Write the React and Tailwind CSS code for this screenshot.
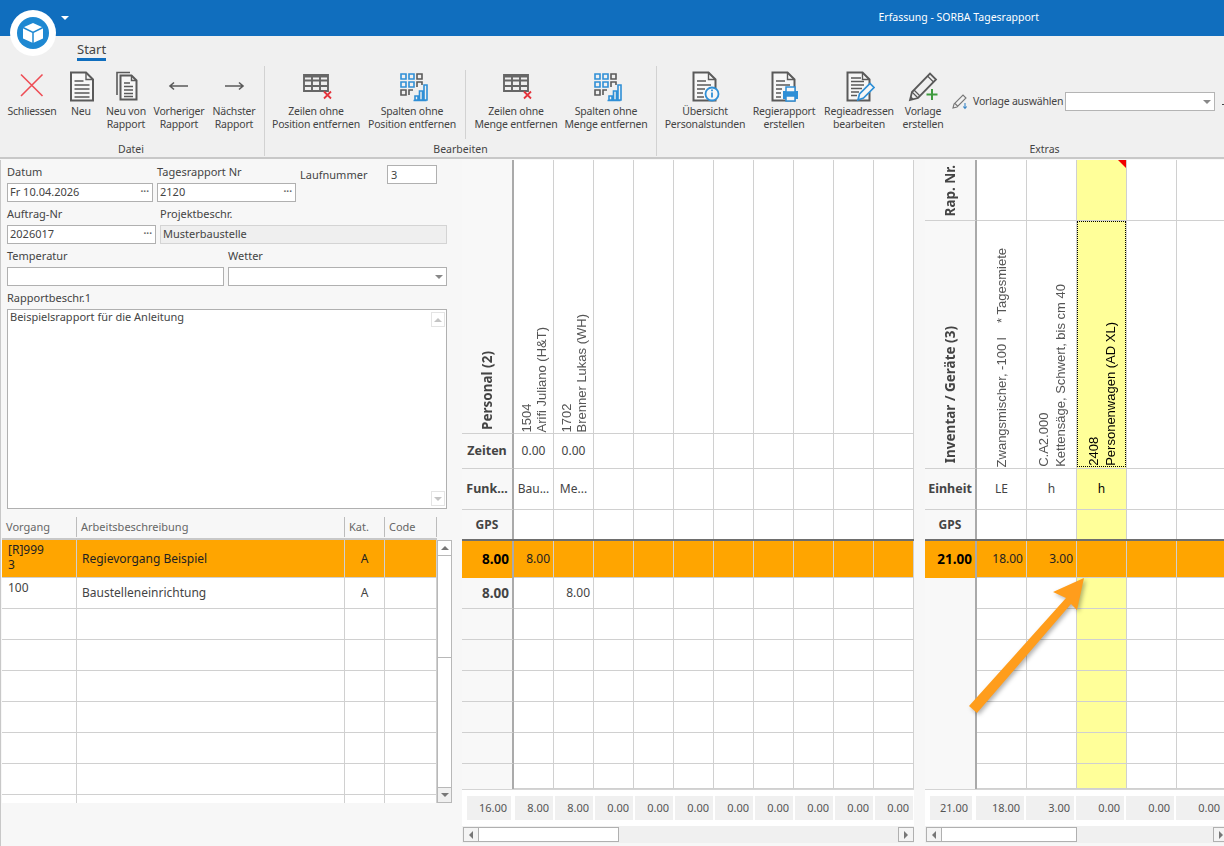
const gray = "#5a5a5a";
const blue = "#2f8fd6";

function Doc({ children, back, dx = 0 }) {
  return (
    <svg width="32" height="32" viewBox="0 0 32 32" fill="none">
      <g transform={`translate(${dx} 0)`}>
        {back && <path d="M5 25V2.5h13" stroke={gray} strokeWidth="1.6" />}
        <path d={back ? "M8.5 5.5h11l5 5v19h-16z" : "M4.5 2.5h15l7 7v21h-22z"} stroke={gray} strokeWidth="2" fill="#f7f7f7" />
        <path d={back ? "M19.5 5.5v5h5" : "M19.5 2.5v7h7"} stroke={gray} strokeWidth="1.4" />
        {children}
      </g>
    </svg>
  );
}

function Lines({ d }) {
  return <path d={d} stroke={gray} strokeWidth="1.5" />;
}

const icons = {
  close: (
    <svg width="32" height="32" viewBox="0 0 32 32" fill="none">
      <path d="M5 4.5l21.500 21.500M26.500 4.500L5 26" stroke="#ee4d55" strokeWidth="1.6" />
    </svg>
  ),
  neu: <Doc dx={1.5}><Lines d="M8 11h9M8 15h15M8 19h15M8 23h15M8 27h15" /></Doc>,
  neuVon: <Doc back dx={2}><Lines d="M12 13h6M12 16.500h9M12 20h9M12 23.500h9M12 26.500h9" /></Doc>,
  prev: (
    <svg width="32" height="32" viewBox="0 0 32 32" fill="none">
      <path d="M7 16h18M11 12.500L7 16l4 3.500" stroke={gray} strokeWidth="1.6" />
    </svg>
  ),
  next: (
    <svg width="32" height="32" viewBox="0 0 32 32" fill="none">
      <path d="M7 16h18M21 12.500L25 16l-4 3.500" stroke={gray} strokeWidth="1.6" />
    </svg>
  ),
  rows: (
    <svg width="32" height="32" viewBox="0 0 32 32" fill="none">
      <path d="M4 5h24v16H4zM4 10.500h24M4 16h24M12 5v16M20 5v16" stroke="#666" strokeWidth="1.900" />
      <path d="M4 5h24v2.500H4z" fill="#666" />
      <path d="M24 21.500l7 7M31 21.500l-7 7" stroke="#e5343c" strokeWidth="1.8" />
    </svg>
  ),
  cols: (
    <svg width="32" height="32" viewBox="0 0 32 32" fill="none">
      <path d="M5 4h5v5H5zM13 4h5v5h-5zM5 12h5v5H5zM13 12h5v5h-5z" stroke={blue} strokeWidth="1.6" />
      <path d="M21 4h5v5h-5z" stroke={gray} strokeWidth="1.6" />
      <path d="M21 17v-5h5v3M5 20h5v5H5zM13 25v-5h4" stroke={gray} strokeWidth="1.6" />
      <path d="M17.500 30.500h13M19 26h3v4h-3zM23.500 21h3v9h-3zM28 15h3v15h-3z" stroke={blue} strokeWidth="1.600" />
    </svg>
  ),
  info: (
    <Doc>
      <Lines d="M8 11h9M8 15h14M8 19h8M8 23h6M8 27h7" />
      <circle cx="23" cy="24" r="6.500" fill="#f7f7f7" stroke={blue} strokeWidth="1.800" />
      <path d="M23 22.500v5M23 19.500v1.800" stroke={blue} strokeWidth="1.800" />
    </Doc>
  ),
  print: (
    <Doc>
      <Lines d="M8 11h9M8 15h14M8 19h6M8 23h5M8 27h5" />
      <path d="M15 21h15v8H15z" fill={blue} />
      <path d="M18 17h9v5h-9zM18 26h9v5h-9z" fill="#f7f7f7" stroke={blue} strokeWidth="1.500" />
    </Doc>
  ),
  edit: (
    <Doc>
      <Lines d="M8 8h10M8 11.500h13M8 15h13M8 18.500h11M8 22h8M8 25.500h6" />
      <path d="M15 30l1.500-6L27 13.500l4 4L20.500 28z" fill="#f7f7f7" stroke={blue} strokeWidth="1.700" />
    </Doc>
  ),
  vorlage: (
    <svg width="32" height="32" viewBox="0 0 32 32" fill="none">
      <path d="M3 30l2-8L23 3.500l6 6L11 28z" stroke={gray} strokeWidth="1.800" />
      <path d="M5 22l6 6M7 20l6 6M20.500 6l6 6" stroke={gray} strokeWidth="1.200" />
      <path d="M3 30l.8-4 3.200 3.200z" fill={gray} />
      <path d="M25 19v11M19.500 24.500h11" stroke="#3f9b3f" strokeWidth="2" />
    </svg>
  ),
};

const dateiButtons = [
  { w: "w-[52px]", icon: "close", text: ["Schliessen"] },
  { w: "w-[46px]", icon: "neu", text: ["Neu"] },
  { w: "w-[44px]", icon: "neuVon", text: ["Neu von", "Rapport"] },
  { w: "w-[62px]", icon: "prev", text: ["Vorheriger", "Rapport"] },
  { w: "w-[48px]", icon: "next", text: ["Nächster", "Rapport"] },
];

function RibbonButton({ w, icon, text }) {
  return (
    <div className={`${w} flex flex-col items-center shrink-0`}>
      <div className="h-[32px] w-[32px]">{icons[icon]}</div>
      <div className="mt-[3px] flex flex-col items-center whitespace-nowrap text-[10.5px] leading-[13px] text-[#444] tracking-[-0.2px]">
        {text.map((t) => (
          <span key={t}>{t}</span>
        ))}
      </div>
    </div>
  );
}

function GroupLabel({ children, className }) {
  return <div className={`mt-auto h-[14px] text-center text-[10.5px] leading-[14px] text-[#444] ${className || ""}`}>{children}</div>;
}

function Ribbon() {
  return (
    <div className="h-[123px] bg-[#f0f0f0] border-b-2 border-[#c8c8c8] shrink-0">
      <div className="flex h-[30px] pl-[77px] pt-[6px]">
        <div className="h-[19px] border-b-[3px] border-[#106ebe] text-[13px] leading-[15px] text-[#444]">Start</div>
      </div>
      <div className="flex h-[90px]">
        <div className="flex w-[265px] flex-col border-r border-[#d2d2d2] pt-[4px] pl-[6px]">
          <div className="flex">
            {dateiButtons.map((b) => (
              <RibbonButton key={b.icon} {...b} />
            ))}
          </div>
          <GroupLabel className="pr-[8px]">Datei</GroupLabel>
        </div>
        <div className="flex w-[392px] flex-col border-r border-[#d2d2d2] pt-[4px]">
          <div className="flex">
            <div className="flex h-[69px] w-[201px] border-r border-[#d2d2d2] pl-[3px]">
              <RibbonButton w="w-[96px]" icon="rows" text={["Zeilen ohne", "Position entfernen"]} />
              <RibbonButton w="w-[96px]" icon="cols" text={["Spalten ohne", "Position entfernen"]} />
            </div>
            <div className="flex pl-[2px]">
              <RibbonButton w="w-[96px]" icon="rows" text={["Zeilen ohne", "Menge entfernen"]} />
              <RibbonButton w="w-[84px]" icon="cols" text={["Spalten ohne", "Menge entfernen"]} />
            </div>
          </div>
          <GroupLabel>Bearbeiten</GroupLabel>
        </div>
        <div className="flex w-[567px] flex-col pt-[4px] pl-[7px] overflow-hidden">
          <div className="flex">
            <RibbonButton w="w-[82px]" icon="info" text={["Übersicht", "Personalstunden"]} />
            <RibbonButton w="w-[76px]" icon="print" text={["Regierapport", "erstellen"]} />
            <RibbonButton w="w-[74px]" icon="edit" text={["Regieadressen", "bearbeiten"]} />
            <RibbonButton w="w-[54px]" icon="vorlage" text={["Vorlage", "erstellen"]} />
            <div className="ml-[2px] flex h-[19px] mt-[22px] items-center">
              <svg width="17" height="17" viewBox="0 0 17 17" fill="none">
                <path d="M1 15l1-4L11 2l3 3-9 9zM3 10.500l3 3" stroke="#777" strokeWidth="1.100" />
                <path d="M13 10v5M11.300 13.500L13 15.500l1.700-2" stroke="#3a87c8" strokeWidth="1.100" />
              </svg>
              <span className="ml-[4px] w-[92px] whitespace-nowrap text-[10.5px] text-[#444] tracking-[-0.2px]">Vorlage auswählen</span>
              <div className="flex h-[19px] w-[150px] items-center justify-end border border-[#b4b4b4] bg-white pr-[3px]">
                <Caret />
              </div>
              <div className="ml-[7px] mt-[6px] h-[1px] w-[3px] bg-[#444]" />
            </div>
          </div>
          <GroupLabel className="w-[761px]">Extras</GroupLabel>
        </div>
      </div>
    </div>
  );
}

function Caret() {
  return <div className="h-0 w-0 border-x-[4px] border-t-[4px] border-x-transparent border-t-[#888]" />;
}

function Dots() {
  return <span className="text-[10px] font-bold leading-[10px] tracking-[0px] text-[#666] -mt-[4px]">···</span>;
}

function Field({ label, w, className, children }) {
  return (
    <div className={`${w} shrink-0 ${className || ""}`}>
      <div className="h-[18px] whitespace-nowrap text-[11px] leading-[14px] text-[#444]">{label}</div>
      {children}
    </div>
  );
}

function Input({ value, dots, caret, disabled }) {
  return (
    <div className={`flex h-[19px] items-center justify-between border pl-[2px] pr-[3px] text-[11px] text-[#444] ${disabled ? "border-[#d4d4d4] bg-[#efefef]" : "border-[#b0b0b0] bg-white"}`}>
      <span>{value}</span>
      {dots && <Dots />}
      {caret && <Caret />}
    </div>
  );
}

const leftRows = [
  { h: "h-[38px]", bg: "bg-[#ffa500]", text: "text-[#222]", a: "[R]999", a2: "3", b: "Regievorgang Beispiel", c: "A" },
  { h: "h-[31px]", bg: "bg-white", text: "text-[#444]", a: "100", b: "Baustelleneinrichtung", c: "A" },
  { h: "h-[31px]", bg: "bg-white" },
  { h: "h-[31px]", bg: "bg-white" },
  { h: "h-[31px]", bg: "bg-white" },
  { h: "h-[31px]", bg: "bg-white" },
  { h: "h-[31px]", bg: "bg-white" },
  { h: "h-[31px]", bg: "bg-white" },
  { h: "h-[8px]", bg: "bg-white", last: true },
];

function ScrollBtn({ up }) {
  return (
    <div className="flex h-[15px] w-[14px] shrink-0 items-center justify-center border border-[#e4e4e4] bg-white">
      <div className={`h-0 w-0 border-x-[4px] border-x-transparent ${up ? "border-b-[4px] border-b-[#c4c4c4]" : "border-t-[4px] border-t-[#c4c4c4]"}`} />
    </div>
  );
}

function LeftTable() {
  return (
    <div className="flex pl-[1px]">
      <div className="w-[435px]">
        <div className="flex h-[23px] border-b-2 border-[#c8c8c8] text-[11px] text-[#666]">
          <div className="w-[75px] border-r border-[#bcbcbc] h-[20px] pl-[4px] leading-[20px]">Vorgang</div>
          <div className="w-[268px] border-r border-[#bcbcbc] h-[20px] pl-[4px] leading-[20px]">Arbeitsbeschreibung</div>
          <div className="w-[40px] border-r border-[#bcbcbc] h-[20px] pl-[4px] leading-[20px]">Kat.</div>
          <div className="w-[52px] border-r border-[#bcbcbc] h-[20px] pl-[4px] leading-[20px]">Code</div>
        </div>
        {leftRows.map((r, i) => (
          <div key={i} className={`flex ${r.h} ${r.bg} ${r.text || ""} ${r.last ? "" : "border-b border-[#d0d0d0]"} text-[12px]`}>
            <div className="w-[75px] border-r border-[#d0d0d0] pl-[6px] pt-[2px] leading-[15px]">
              <div>{r.a}</div>
              <div>{r.a2}</div>
            </div>
            <div className="flex w-[268px] items-center border-r border-[#d0d0d0] pl-[5px]">{r.b}</div>
            <div className="flex w-[40px] items-center justify-center border-r border-[#d0d0d0]">{r.c}</div>
            <div className="w-[52px] border-r border-[#d0d0d0]" />
          </div>
        ))}
      </div>
      <div className="mt-[23px] flex h-[263px] w-[15px] flex-col bg-white border border-[#b8b8b8]">
        <div className="flex h-[15px] shrink-0 items-center justify-center border-b border-[#b8b8b8]">
          <div className="h-0 w-0 border-x-[4px] border-b-[4px] border-x-transparent border-b-[#777]" />
        </div>
        <div className="h-[102px] border-b border-[#b8b8b8]" />
        <div className="mt-auto flex h-[15px] shrink-0 items-center justify-center border-t border-[#b8b8b8] bg-[#f0f0f0]">
          <div className="h-0 w-0 border-x-[4px] border-t-[4px] border-x-transparent border-t-[#777]" />
        </div>
      </div>
    </div>
  );
}

function LeftPanel() {
  return (
    <div className="w-[458px] shrink-0 border-l border-[#c8c8c8] pt-[5px]">
      <div className="flex pl-[6px]">
        <Field label="Datum" w="w-[146px]"><Input value="Fr 10.04.2026" dots /></Field>
        <Field label="Tagesrapport Nr" w="w-[139px]" className="ml-[4px]"><Input value="2120" dots /></Field>
        <div className="ml-[4px] flex">
          <div className="h-[20px] w-[87px] text-[11px] leading-[20px] text-[#444]">Laufnummer</div>
          <div className="h-[19px] w-[50px] border border-[#b0b0b0] bg-white px-[3px] text-[11px] leading-[17px] text-[#444]">3</div>
        </div>
      </div>
      <div className="mt-[5px] flex pl-[6px]">
        <Field label="Auftrag-Nr" w="w-[149px]"><Input value="2026017" dots /></Field>
        <Field label="Projektbeschr." w="w-[287px]" className="ml-[4px]"><Input value="Musterbaustelle" disabled /></Field>
      </div>
      <div className="mt-[5px] flex pl-[6px]">
        <Field label="Temperatur" w="w-[217px]"><Input /></Field>
        <Field label="Wetter" w="w-[219px]" className="ml-[4px]"><Input caret /></Field>
      </div>
      <div className="mt-[5px] pl-[6px]">
        <Field label="Rapportbeschr.1" w="w-[440px]">
          <div className="flex h-[200px] border border-[#b0b0b0] bg-white pl-[2px] text-[11px] text-[#444]">
            <div className="flex-1 leading-[14px]">Beispielsrapport für die Anleitung</div>
            <div className="mr-[1px] flex flex-col justify-between py-[2px]">
              <ScrollBtn up />
              <ScrollBtn />
            </div>
          </div>
        </Field>
      </div>
      <div className="mt-[8px]">
        <LeftTable />
      </div>
    </div>
  );
}

function Vertical({ lines, dark, className }) {
  return (
    <div className={`[writing-mode:vertical-rl] rotate-180 whitespace-pre ${className || ""} ${dark ? "text-black" : "text-[#555]"}`}>
      {lines.map((l) => (
        <div key={l}>{l}</div>
      ))}
    </div>
  );
}

const headCell = "shrink-0 w-[52px] border-r-2 border-[#aaaaaa] bg-[#f8f8f8] font-bold text-[#444]";

function Row({ h, head, cells, count, cw, bg, yellow, headLine }) {
  const list = Array.from({ length: count });
  return (
    <div className={`flex ${h}`}>
      <div className={`${headCell} flex items-center justify-end pr-[3px] text-[13.5px] ${bg === "orange" ? "!bg-[#ffa500] !text-black" : ""} ${headLine ? "border-b border-b-[#d0d0d0]" : ""}`}>
        {head}
      </div>
      {list.map((_, i) => (
        <div
          key={i}
          className={`${cw} shrink-0 flex items-center justify-end border-r border-b border-[#d0d0d0] pr-[3px] text-[12px] text-[#444] ${bg === "orange" ? "bg-[#ffa500] !text-[#222]" : yellow === i ? "bg-[#ffff99]" : "bg-white"}`}
        >
          {cells && cells[i]}
        </div>
      ))}
    </div>
  );
}

function CenterRow({ h, head, cells, count, cw, yellow, headLine }) {
  const list = Array.from({ length: count });
  return (
    <div className={`flex ${h}`}>
      <div className={`${headCell} flex items-center justify-center whitespace-nowrap text-[12.5px] ${headLine ? "border-b border-b-[#d0d0d0]" : ""}`}>{head}</div>
      {list.map((_, i) => (
        <div
          key={i}
          className={`${cw} shrink-0 flex items-center justify-center border-r border-b border-[#d0d0d0] text-[12px] ${yellow === i ? "bg-[#ffff99] text-black" : "bg-white text-[#444]"}`}
        >
          {cells && cells[i]}
        </div>
      ))}
    </div>
  );
}

function DataRows({ count, cw, yellow, orange, second, headLine }) {
  const blank = ["h-[31px]", "h-[31px]", "h-[31px]", "h-[31px]", "h-[31px]", "h-[25px]"];
  return (
    <>
      <div className="h-[2px] bg-[#6e6e6e]" />
      <Row h="h-[37px]" head={orange.head} cells={orange.cells} count={count} cw={cw} bg="orange" />
      <Row h="h-[31px]" head={second && second.head} cells={second && second.cells} count={count} cw={cw} yellow={yellow} headLine={headLine} />
      {blank.map((h, i) => (
        <Row key={i} h={h} count={count} cw={cw} yellow={yellow} headLine={headLine && i < 5} />
      ))}
    </>
  );
}

function Footer({ first, values, firstW, w }) {
  return (
    <div className="h-[37px] border-t border-[#d4d4d4] bg-white pt-[6px] flex gap-[2px] pl-[5px]">
      <div className={`${firstW} mr-[2px] flex h-[24px] items-center justify-end bg-[#f0f0f0] pr-[4px] text-[11px] text-[#555]`}>{first}</div>
      {values.map((v, i) => (
        <div key={i} className={`${w} flex h-[24px] shrink-0 items-center justify-end bg-[#f0f0f0] pr-[4px] text-[11px] text-[#555]`}>{v}</div>
      ))}
    </div>
  );
}

function HBar({ thumb, spacer }) {
  return (
    <div className="flex h-[17px] items-start bg-[#f0f0f0] pt-[1px] pl-[1px]">
      <div className="flex h-[15px] w-[16px] shrink-0 items-center justify-center border border-[#b0b0b0] bg-[#f4f4f4]">
        <div className="h-0 w-0 border-y-[4px] border-r-[4px] border-y-transparent border-r-[#777]" />
      </div>
      <div className={`${thumb} h-[15px] shrink-0 border border-l-0 border-[#b0b0b0] bg-white`} />
      <div className={`${spacer} shrink-0`} />
      <div className="flex h-[15px] w-[16px] shrink-0 items-center justify-center border border-[#b0b0b0] bg-[#f4f4f4]">
        <div className="h-0 w-0 border-y-[4px] border-l-[4px] border-y-transparent border-l-[#777]" />
      </div>
    </div>
  );
}

function PersonalGrid() {
  const cols = Array.from({ length: 10 });
  return (
    <div className="w-[452px] shrink-0 overflow-hidden">
      <div className="flex h-[274px]">
        <div className={`${headCell} flex items-end justify-center border-b border-b-[#d0d0d0] pb-[3px] text-[13.5px]`}>
          <Vertical lines={["Personal (2)"]} className="!text-[#444]" />
        </div>
        {cols.map((_, i) => (
          <div key={i} className="flex w-[40px] shrink-0 items-end justify-center border-r border-b border-[#d0d0d0] bg-white pb-[1px] font-['Liberation_Sans',sans-serif] text-[13px] leading-[15px]">
            {i === 0 && <Vertical lines={["1504", "Arifi Juliano (H&T)"]} />}
            {i === 1 && <Vertical lines={["1702", "Brenner Lukas (WH)"]} />}
          </div>
        ))}
      </div>
      <CenterRow h="h-[35px]" head="Zeiten" cells={["0.00", "0.00"]} count={10} cw="w-[40px]" headLine />
      <CenterRow h="h-[41px]" head="Funk..." cells={["Bau...", "Me..."]} count={10} cw="w-[40px]" headLine />
      <div className="flex h-[29px]">
        <div className={`${headCell} flex items-center justify-center text-[12px]`}>GPS</div>
        {cols.map((_, i) => (
          <div key={i} className="w-[40px] shrink-0 border-r border-[#d0d0d0] bg-white" />
        ))}
      </div>
      <DataRows
        count={10}
        cw="w-[40px]"
        orange={{ head: "8.00", cells: ["8.00"] }}
        second={{ head: "8.00", cells: ["", "8.00"] }}
        headLine
      />
      <Footer first="16.00" firstW="w-[44px]" w="w-[38px]" values={["8.00", "8.00", "0.00", "0.00", "0.00", "0.00", "0.00", "0.00", "0.00", "0.00"]} />
      <HBar thumb="w-[140px]" spacer="w-[279px]" />
    </div>
  );
}

function InventarGrid() {
  const cols = Array.from({ length: 5 });
  return (
    <div className="ml-[11px] w-[299px] shrink-0 overflow-hidden">
      <div className="flex h-[61px]">
        <div className={`${headCell} flex items-end justify-center border-b border-b-[#d0d0d0] pb-[4px] text-[13.5px]`}>
          <Vertical lines={["Rap. Nr."]} className="!text-[#444]" />
        </div>
        {cols.map((_, i) => (
          <div key={i} className={`relative w-[50px] shrink-0 border-r border-b border-[#d0d0d0] ${i === 2 ? "bg-[#ffff99]" : "bg-white"}`}>
            {i === 2 && <div className="absolute right-0 top-0 h-0 w-0 border-l-[8px] border-t-[8px] border-l-transparent border-t-[#f00000]" />}
          </div>
        ))}
      </div>
      <div className="flex h-[248px]">
        <div className={`${headCell} flex items-end justify-center border-b border-b-[#d0d0d0] pb-[5px] text-[13.5px]`}>
          <Vertical lines={["Inventar / Geräte (3)"]} className="!text-[#444]" />
        </div>
        {cols.map((_, i) => (
          <div key={i} className={`flex w-[50px] shrink-0 items-end justify-center border-r border-b border-[#d0d0d0] pb-[1px] font-['Liberation_Sans',sans-serif] text-[13px] leading-[17px] ${i === 2 ? "bg-[#ffff99]" : "bg-white"}`}>
            {i === 0 && <Vertical lines={["Zwangsmischer, -100 l    * Tagesmiete"]} className="pb-[3px]" />}
            {i === 1 && <Vertical lines={["C.A2.000", "Kettensäge, Schwert, bis cm 40"]} />}
            {i === 2 && (
              <div className="flex h-full w-full items-end justify-center border border-dotted border-black">
                <Vertical lines={["2408", "Personenwagen (AD XL)"]} dark />
              </div>
            )}
          </div>
        ))}
      </div>
      <CenterRow h="h-[41px]" head="Einheit" cells={["LE", "h", "h"]} count={5} cw="w-[50px]" yellow={2} headLine />
      <div className="flex h-[29px]">
        <div className={`${headCell} flex items-center justify-center text-[12px]`}>GPS</div>
        {cols.map((_, i) => (
          <div key={i} className={`w-[50px] shrink-0 border-r border-[#d0d0d0] ${i === 2 ? "bg-[#ffff99]" : "bg-white"}`} />
        ))}
      </div>
      <DataRows count={5} cw="w-[50px]" yellow={2} orange={{ head: "21.00", cells: ["18.00", "3.00"] }} />
      <Footer first="21.00" firstW="w-[42px]" w="w-[48px]" values={["18.00", "3.00", "0.00", "0.00", "0.00"]} />
      <HBar thumb="w-[135px]" spacer="w-[136px]" />
    </div>
  );
}

export default function App() {
  return (
    <div className="relative flex h-[846px] w-[1224px] flex-col overflow-hidden bg-[#f7f7f7] font-['Noto_Sans','DejaVu_Sans',sans-serif]">
      <div className="flex h-[36px] shrink-0 items-center justify-between bg-[#106ebe] pl-[61px] pr-[185px]">
        <div className="h-0 w-0 border-x-[4px] border-t-[4px] border-x-transparent border-t-white -mt-[1px]" />
        <span className="text-[10.5px] text-white">Erfassung - SORBA Tagesrapport</span>
      </div>
      <Ribbon />
      <div className="flex flex-1 pt-[1px]">
        <LeftPanel />
        <div className="flex pl-[4px]">
          <PersonalGrid />
          <InventarGrid />
        </div>
      </div>

      {/* logo */}
      <div className="absolute left-[10px] top-[10px] flex h-[46px] w-[46px] items-center justify-center rounded-full bg-white">
        <svg width="32" height="32" viewBox="0 0 32 32">
          <circle cx="16" cy="16" r="16" fill="#1e88d2" />
          <path d="M16 6l10 4.500v11L16 26 6 21.500v-11z" fill="#fff" />
          <path d="M16 15.500v10.500M6 10.500l10 5 10-5" stroke="#1e88d2" strokeWidth="1.500" fill="none" />
        </svg>
      </div>

      {/* annotation arrow */}
      <svg className="absolute left-0 top-0" width="1224" height="846" viewBox="0 0 1224 846">
        <polygon points="969,706 1066,598 1053,592 1084,578 1077,610 1071,604 977,713" fill="#ff9d1c" style={{ filter: "drop-shadow(2px 2px 2px rgba(0,0,0,0.3))" }} />
      </svg>
    </div>
  );
}
